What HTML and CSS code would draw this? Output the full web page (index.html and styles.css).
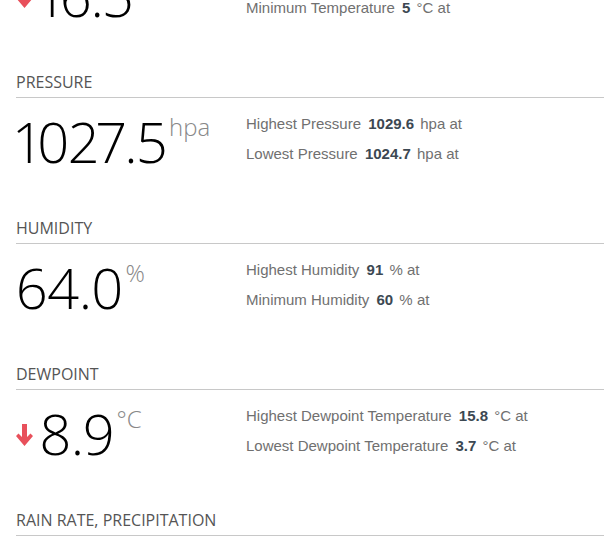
FILE: index.html
```html
<!DOCTYPE html>
<html lang="en">
<head>
    <meta charset="UTF-8">
    <meta name="viewport" content="width=device-width, initial-scale=1.0">
    <title>Weather Station</title>
    <link rel="stylesheet" href="styles.css">
</head>
<body>
    <div class="page">
        <!-- Temperature -->
        <div class="section">
            <h3 class="section-title">TEMPERATURE</h3>
            <div class="reading">
                <div class="current">
                    <svg class="trend" viewBox="0 0 17 22" width="17" height="22"><path d="M6 0H11V13L14.5 9.5L17 12L8.5 22L0 12L2.5 9.5L6 13Z"/></svg>
                    <span class="value">16.5</span><span class="unit">&deg;C</span>
                </div>
                <div class="stats">
                    <div>Highest Temperature <b>17.1</b> &deg;C at</div>
                    <div>Minimum Temperature <b>5</b> &deg;C at</div>
                </div>
            </div>
        </div>

        <!-- Pressure -->
        <div class="section">
            <h3 class="section-title">PRESSURE</h3>
            <div class="reading">
                <div class="current">
                    <span class="value">1027.5</span><span class="unit">hpa</span>
                </div>
                <div class="stats">
                    <div>Highest Pressure <b>1029.6</b> hpa at</div>
                    <div>Lowest Pressure <b>1024.7</b> hpa at</div>
                </div>
            </div>
        </div>

        <!-- Humidity -->
        <div class="section">
            <h3 class="section-title">HUMIDITY</h3>
            <div class="reading">
                <div class="current">
                    <span class="value">64.0</span><span class="unit">%</span>
                </div>
                <div class="stats">
                    <div>Highest Humidity <b>91</b> % at</div>
                    <div>Minimum Humidity <b>60</b> % at</div>
                </div>
            </div>
        </div>

        <!-- Dewpoint -->
        <div class="section">
            <h3 class="section-title">DEWPOINT</h3>
            <div class="reading">
                <div class="current">
                    <svg class="trend" viewBox="0 0 17 22" width="17" height="22"><path d="M6 0H11V13L14.5 9.5L17 12L8.5 22L0 12L2.5 9.5L6 13Z"/></svg>
                    <span class="value">8.9</span><span class="unit">&deg;C</span>
                </div>
                <div class="stats">
                    <div>Highest Dewpoint Temperature <b>15.8</b> &deg;C at</div>
                    <div>Lowest Dewpoint Temperature <b>3.7</b> &deg;C at</div>
                </div>
            </div>
        </div>

        <!-- Rain -->
        <div class="section">
            <h3 class="section-title">RAIN RATE, PRECIPITATION</h3>
        </div>
    </div>
</body>
</html>
```

FILE: styles.css
```css
body {
    margin: 0;
    background-color: #fff;
    font-family: "Open Sans", sans-serif;
}
.page {
    margin-top: -74px; /* page is scrolled a little */
    padding: 0 12px 0 16px;
}
.section {
    padding-bottom: 49px;
}
.section-title {
    margin: 0;
    padding-bottom: 5px;
    border-bottom: 1px solid #c8c8c8;
    font-size: 16px;
    font-weight: 400;
    line-height: 20px;
    color: #555;
}
.reading {
    display: flex;
    margin-top: 10px;
}
.current {
    width: 230px;
    flex-shrink: 0;
    display: flex;
    align-items: center;
    padding-top: 5px;
    height: 56px;
}
.trend {
    fill: #e8505b;
    margin-right: 6px;
    margin-top: 3px;
}
.value {
    font-size: 56px;
    font-weight: 350;
    line-height: 56px;
    font-variant-numeric: proportional-nums;
    letter-spacing: -1px;
    color: #000;
}
.unit {
    align-self: flex-start;
    margin-left: 3px;
    margin-top: 2px;
    font-size: 24px;
    font-weight: 300;
    line-height: 24px;
    color: #888;
}
.stats {
    padding-top: 1px;
    font-family: "Liberation Sans", Arial, sans-serif;
    font-size: 15px;
    line-height: 30px;
    color: #707070;
}
.stats b {
    margin: 0 2px 0 3px;
    color: #3c4852;
}
```
